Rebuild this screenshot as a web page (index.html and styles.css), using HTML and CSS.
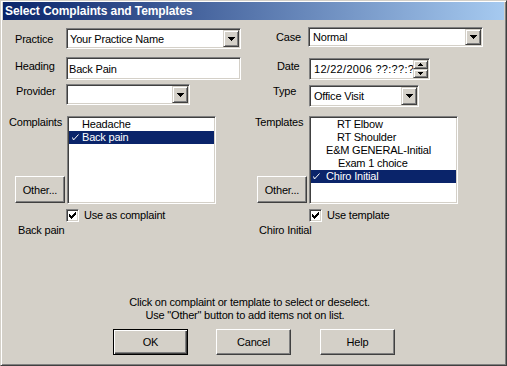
FILE: index.html
```html
<!DOCTYPE html>
<html>
<head>
<meta charset="utf-8">
<link rel="stylesheet" href="styles.css">
</head>
<body>
<div class="window">
  <div class="titlebar">Select Complaints and Templates</div>
  <div class="content">
    <div class="fields">
      <div class="fcol">
        <div class="frow r-practice">
          <span class="flabel l-practice">Practice</span>
          <div class="field combo w-practice"><span class="ftext">Your Practice Name</span><span class="drop"><svg width="7" height="4" shape-rendering="crispEdges"><path d="M0 0h7v1H0zM1 1h5v1H1zM2 2h3v1H2zM3 3h1v1H3z"/></svg></span></div>
        </div>
        <div class="frow r-heading">
          <span class="flabel l-heading">Heading</span>
          <div class="field input w-heading"><span class="ftext">Back Pain</span></div>
        </div>
        <div class="frow r-provider">
          <span class="flabel l-provider">Provider</span>
          <div class="field combo w-provider"><span class="ftext"></span><span class="drop"><svg width="7" height="4" shape-rendering="crispEdges"><path d="M0 0h7v1H0zM1 1h5v1H1zM2 2h3v1H2zM3 3h1v1H3z"/></svg></span></div>
        </div>
      </div>
      <div class="fcol">
        <div class="frow r-case">
          <span class="flabel rlabel l-case">Case</span>
          <div class="field combo w-case"><span class="ftext">Normal</span><span class="drop"><svg width="7" height="4" shape-rendering="crispEdges"><path d="M0 0h7v1H0zM1 1h5v1H1zM2 2h3v1H2zM3 3h1v1H3z"/></svg></span></div>
        </div>
        <div class="frow r-date">
          <span class="flabel rlabel l-date">Date</span>
          <div class="field input w-date"><span class="ftext">12/22/2006 ??:??:??</span>
            <span class="spin">
              <span class="spin-btn"><svg width="5" height="3" shape-rendering="crispEdges"><path d="M2 0h1v1H2zM1 1h3v1H1zM0 2h5v1H0z"/></svg></span>
              <span class="spin-btn"><svg width="5" height="3" shape-rendering="crispEdges"><path d="M0 0h5v1H0zM1 1h3v1H1zM2 2h1v1H2z"/></svg></span>
            </span>
          </div>
        </div>
        <div class="frow r-type">
          <span class="flabel rlabel l-type">Type</span>
          <div class="field combo w-type"><span class="ftext">Office Visit</span><span class="drop"><svg width="7" height="4" shape-rendering="crispEdges"><path d="M0 0h7v1H0zM1 1h5v1H1zM2 2h3v1H2zM3 3h1v1H3z"/></svg></span></div>
        </div>
      </div>
    </div>

    <div class="lists">
      <div class="group g-left">
        <div class="side">
          <span class="side-label">Complaints</span>
          <button class="btn other">Other...</button>
        </div>
        <div class="field listbox">
          <div class="item i-c">Headache</div>
          <div class="item selected i-cs"><svg class="tick" width="7" height="7"><polyline points="0.5,3.5 1.5,6 6.5,0.5" fill="none" stroke="#fff" stroke-width="1"/></svg>Back pain</div>
        </div>
        <label class="check-row">
          <span class="checkbox"><svg width="7" height="7" shape-rendering="crispEdges"><path d="M6 0h1v1H6zM5 1h2v1H5zM0 2h1v1H0zM4 2h3v1H4zM0 3h2v1H0zM3 3h3v1H3zM0 4h5v1H0zM1 5h3v1H1zM2 6h1v1H2z"/></svg></span>
          <span>Use as complaint</span>
        </label>
        <div class="chosen">Back pain</div>
      </div>
      <div class="group g-right">
        <div class="side">
          <span class="side-label">Templates</span>
          <button class="btn other">Other...</button>
        </div>
        <div class="field listbox">
          <div class="item i-t2">RT Elbow</div>
          <div class="item i-t2">RT Shoulder</div>
          <div class="item i-t1">E&amp;M GENERAL-Initial</div>
          <div class="item i-t3">Exam 1 choice</div>
          <div class="item selected i-ts"><svg class="tick" width="7" height="7"><polyline points="0.5,3.5 1.5,6 6.5,0.5" fill="none" stroke="#fff" stroke-width="1"/></svg>Chiro Initial</div>
        </div>
        <label class="check-row">
          <span class="checkbox"><svg width="7" height="7" shape-rendering="crispEdges"><path d="M6 0h1v1H6zM5 1h2v1H5zM0 2h1v1H0zM4 2h3v1H4zM0 3h2v1H0zM3 3h3v1H3zM0 4h5v1H0zM1 5h3v1H1zM2 6h1v1H2z"/></svg></span>
          <span>Use template</span>
        </label>
        <div class="chosen">Chiro Initial</div>
      </div>
    </div>

    <div class="spacer"></div>

    <div class="hint">
      <span class="hint-line">Click on complaint or template to select or deselect.</span>
      <span class="hint-line second">Use "Other" button to add items not on list.</span>
    </div>

    <div class="actions">
      <button class="btn action default">OK</button>
      <button class="btn action">Cancel</button>
      <button class="btn action help">Help</button>
    </div>
  </div>
</div>
</body>
</html>
```
FILE: styles.css
```css
* { box-sizing: border-box; }

body {
  margin: 0;
  background: #d4d0c8;
  font-family: "Liberation Sans", Arial, sans-serif;
  font-size: 11px;
  letter-spacing: -0.2px;
  color: #000;
}

.window {
  width: 507px;
  height: 366px;
  background: #d4d0c8;
  border: 1px solid;
  border-color: #d4d0c8 #404040 #404040 #d4d0c8;
  box-shadow: inset 1px 1px #fff, inset -1px -1px #808080;
  padding: 1px 2px 2px 2px;
  display: flex;
  flex-direction: column;
}

.titlebar {
  height: 18px;
  flex: none;
  background: linear-gradient(to right, #0a246a, #a6caf0);
  color: #fff;
  font-weight: bold;
  font-size: 12px;
  letter-spacing: -0.1px;
  display: flex;
  align-items: center;
  padding-left: 2px;
}

.content {
  flex: 1;
  display: flex;
  flex-direction: column;
  padding-bottom: 8px;
}

/* top fields */
.fields {
  display: grid;
  grid-template-columns: 238px 1fr;
  height: 87px;
  flex: none;
}

.fcol { display: flex; flex-direction: column; }

.frow { display: flex; align-items: flex-start; }

.flabel { width: 63px; line-height: 13px; flex: none; padding-left: 12px; }
.rlabel { width: 68px; }

.r-practice { margin-top: 8px; }
.r-heading { margin-top: 8px; }
.r-provider { margin-top: 4px; }
.r-case { margin-top: 7px; }
.r-date { margin-top: 11px; }
.r-type { margin-top: 5px; }

.l-practice { margin-top: 5px; }
.l-heading { margin-top: 3px; }
.l-provider { margin-top: 1px; padding-left: 13px; }
.l-case { margin-top: 4px; padding-left: 35px; }
.l-date { margin-top: 2px; padding-left: 36px; }
.l-type { margin-top: 0; padding-left: 32px; }

.field {
  background: #fff;
  border: 1px solid;
  border-color: #808080 #fff #fff #808080;
  box-shadow: inset 1px 1px #404040, inset -1px -1px #d4d0c8;
  padding: 1px;
}

.combo, .input {
  display: flex;
  align-items: stretch;
  flex: none;
}

.ftext {
  flex: 1;
  display: flex;
  align-items: center;
  padding-left: 2px;
  padding-top: 1px;
  white-space: nowrap;
  overflow: hidden;
  line-height: 13px;
}

.w-practice { width: 175px; height: 21px; }
.w-heading { width: 175px; height: 23px; }
.w-provider { width: 124px; height: 21px; }
.w-case { width: 175px; height: 20px; margin-left: -1px; }
.w-date { width: 121px; height: 22px; }
.w-type { width: 110px; height: 22px; }

.w-heading .ftext { padding-left: 1px; }
.w-case .ftext, .w-type .ftext { padding-left: 3px; }
.w-date .ftext { padding-left: 3px; letter-spacing: 0.3px; }

.drop, .spin-btn {
  background: #d4d0c8;
  border: 1px solid;
  border-color: #d4d0c8 #404040 #404040 #d4d0c8;
  box-shadow: inset 1px 1px #fff, inset -1px -1px #808080;
  display: flex;
  align-items: center;
  justify-content: center;
}

.drop { width: 16px; flex: none; }
.drop svg, .spin-btn svg { display: block; fill: #000; }

.spin { display: flex; flex-direction: column; width: 15px; flex: none; }
.spin-btn { height: 9px; flex: none; }

/* lists */
.lists {
  display: grid;
  grid-template-columns: 238px 1fr;
  margin-top: 9px;
  flex: none;
}

.group {
  display: grid;
  grid-template-rows: 88px auto auto;
}

.g-left { grid-template-columns: 64px 149px; }
.g-right { grid-template-columns: 68px 149px; }

.side {
  display: flex;
  flex-direction: column;
  justify-content: space-between;
  align-items: flex-start;
  padding-bottom: 1px;
}

.side-label { line-height: 13px; }
.g-left .side-label { padding-left: 6px; }
.g-right .side-label { padding-left: 14px; }

.g-left .other { margin-left: 12px; }
.g-right .other { margin-left: 16px; }

.listbox { height: 88px; width: 149px; overflow: hidden; }

.item {
  height: 13px;
  line-height: 13px;
  display: flex;
  align-items: center;
  white-space: nowrap;
}

.item.selected { background: #0a246a; color: #fff; }
.tick { display: block; flex: none; }

.i-c { padding-left: 13px; }
.i-cs { padding-left: 3px; }
.i-cs .tick { margin-right: 3px; }
.i-t1 { padding-left: 15px; }
.i-t2 { padding-left: 26px; }
.i-t3 { padding-left: 27px; }
.i-ts { padding-left: 2px; }
.i-ts .tick { margin-right: 6px; }

.check-row {
  grid-column: 2;
  display: flex;
  align-items: center;
  gap: 5px;
  margin-top: 5px;
  line-height: 13px;
}

.g-left .check-row { margin-left: -1px; }

.checkbox {
  width: 13px;
  height: 13px;
  flex: none;
  background: #fff;
  border: 1px solid;
  border-color: #808080 #fff #fff #808080;
  box-shadow: inset 1px 1px #404040, inset -1px -1px #d4d0c8;
  display: flex;
  align-items: center;
  justify-content: center;
}

.checkbox svg { display: block; fill: #000; }

.chosen {
  grid-column: 1 / span 2;
  margin-top: 2px;
  line-height: 13px;
}

.g-left .chosen { padding-left: 15px; }
.g-right .chosen { padding-left: 18px; }

.spacer { flex: 1; }

.hint {
  display: flex;
  flex-direction: column;
  align-items: center;
  padding-right: 8px;
  line-height: 13px;
  flex: none;
}

.hint-line.second { padding-right: 9px; }

/* buttons */
.btn {
  font-family: inherit;
  font-size: 11px;
  letter-spacing: -0.2px;
  color: #000;
  background: #d4d0c8;
  border: 1px solid;
  border-color: #fff #404040 #404040 #fff;
  box-shadow: inset -1px -1px #808080;
  padding: 0;
  margin: 0;
  display: flex;
  align-items: center;
  justify-content: center;
}

.other { width: 50px; height: 27px; }

.actions {
  display: flex;
  gap: 28px;
  margin-top: 7px;
  padding-left: 110px;
  flex: none;
}

.action { width: 75px; height: 26px; }
.help { margin-left: 1px; }

.btn.default {
  border-color: #000;
  box-shadow: inset 1px 1px #fff, inset -1px -1px #404040, inset -2px -2px #808080;
}
```
